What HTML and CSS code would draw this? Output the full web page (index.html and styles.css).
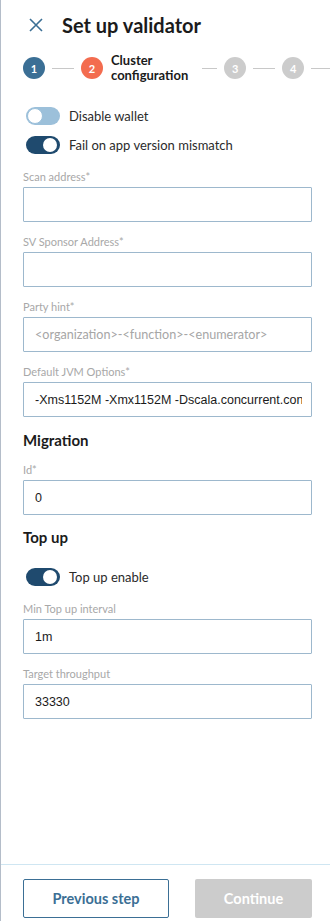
FILE: index.html
```html
<!DOCTYPE html>
<html lang="en">
  <head>
    <meta charset="UTF-8" />
    <meta name="viewport" content="width=device-width, initial-scale=1.0" />
    <title>Set up validator</title>
    <link rel="stylesheet" href="styles.css">
  </head>
  <body>
    <div class="panel">
      <div class="header">
        <button class="close-button" type="button" aria-label="Close">
          <svg width="14" height="14" viewBox="0 0 14 14">
            <path d="M1 1 L13 13 M13 1 L1 13" stroke="#3b6f95" stroke-width="1.6" fill="none" />
          </svg>
        </button>
        <h1>Set up validator</h1>
      </div>

      <div class="stepper">
        <span class="step done">1</span>
        <span class="step-line"></span>
        <span class="step active">2</span>
        <span class="step-text">Cluster<br />configuration</span>
        <span class="step-line short"></span>
        <span class="step">3</span>
        <span class="step-line"></span>
        <span class="step">4</span>
        <span class="step-line grow"></span>
      </div>

      <form class="form" id="validatorForm">
        <div class="toggles">
          <label class="toggle-row">
            <span class="switch light"><span class="knob"></span></span>
            Disable wallet
          </label>
          <label class="toggle-row">
            <span class="switch on"><span class="knob"></span></span>
            Fail on app version mismatch
          </label>
        </div>

        <div class="field">
          <label for="scanAddress">Scan address*</label>
          <input type="text" id="scanAddress" />
        </div>

        <div class="field">
          <label for="sponsorAddress">SV Sponsor Address*</label>
          <input type="text" id="sponsorAddress" />
        </div>

        <div class="field">
          <label for="partyHint">Party hint*</label>
          <input type="text" id="partyHint" placeholder="<organization>-<function>-<enumerator>" />
        </div>

        <div class="field">
          <label for="jvmOptions">Default JVM Options*</label>
          <input type="text" id="jvmOptions" value="-Xms1152M -Xmx1152M -Dscala.concurrent.context.numThreads=8" />
        </div>

        <h2>Migration</h2>
        <div class="field">
          <label for="migrationId">Id*</label>
          <input type="text" id="migrationId" value="0" />
        </div>

        <h2 class="topup-title">Top up</h2>
        <label class="toggle-row topup-toggle">
          <span class="switch on"><span class="knob"></span></span>
          Top up enable
        </label>

        <div class="field">
          <label for="topupInterval">Min Top up interval</label>
          <input type="text" id="topupInterval" value="1m" />
        </div>

        <div class="field">
          <label for="throughput">Target throughput</label>
          <input type="text" id="throughput" value="33330" />
        </div>
      </form>

      <div class="footer">
        <button type="button" class="prev-button">Previous step</button>
        <button type="button" class="continue-button" disabled>Continue</button>
      </div>
    </div>
  </body>
</html>
```

FILE: styles.css
```css
body {
  font-family: "Lato", "Noto Sans", sans-serif;
  margin: 0;
  padding: 0;
  background-color: #ffffff;
  color: #333;
}

.panel {
  display: flex;
  flex-direction: column;
  height: 100vh;
  border-left: 1px solid #b4bdc9;
  box-sizing: border-box;
}

.header {
  display: flex;
  align-items: center;
  padding: 14px 0 0 28px;
  height: 22px;
}

.close-button {
  border: none;
  background: none;
  padding: 0;
  margin: 0 19px 0 0;
  width: 14px;
  height: 14px;
  display: flex;
  cursor: pointer;
}

h1 {
  margin: 0;
  font-size: 20px;
  font-weight: 700;
  color: #1b1b1b;
  line-height: 22px;
}

.stepper {
  display: flex;
  align-items: center;
  gap: 7px;
  margin-top: 17px;
  padding-left: 22px;
}

.step {
  flex: none;
  width: 22px;
  height: 22px;
  border-radius: 50%;
  background-color: #cccccc;
  color: #ffffff;
  font-size: 11px;
  font-weight: 700;
  display: flex;
  align-items: center;
  justify-content: center;
}

.step.done {
  background-color: #3b6f95;
}

.step.active {
  background-color: #f36c4f;
}

.step-text {
  font-size: 13px;
  font-weight: 700;
  line-height: 15px;
  color: #1b1b1b;
  margin: 0 7px 0 1px;
}

.step-line {
  flex: none;
  width: 22px;
  height: 1px;
  background-color: #c8c8c8;
}

.step-line.short {
  width: 15px;
}

.step-line.grow {
  flex: 1;
}

.form {
  flex: 1;
  padding: 0 18px 0 22px;
}

.toggles {
  display: flex;
  flex-direction: column;
  gap: 11px;
  margin-top: 24px;
  margin-bottom: 16px;
}

.toggle-row {
  display: flex;
  align-items: center;
  gap: 9px;
  font-size: 13px;
  color: #2b2b2b;
  padding-left: 3px;
  height: 18px;
}

.switch {
  position: relative;
  flex: none;
  width: 34px;
  height: 18px;
  border-radius: 9px;
  background-color: #1f4a6e;
}

.switch.light {
  background-color: #9cc0da;
}

.knob {
  position: absolute;
  top: 2px;
  right: 3px;
  width: 14px;
  height: 14px;
  border-radius: 50%;
  background-color: #ffffff;
}

.switch.light .knob {
  right: auto;
  top: 1px;
  left: 1px;
  border: 1px solid #9cc0da;
  box-sizing: content-box;
}

.field {
  display: flex;
  flex-direction: column;
  margin-bottom: 13px;
}

.field label {
  font-size: 11px;
  line-height: 14px;
  color: #a8a8a8;
  margin-bottom: 3px;
}

input {
  box-sizing: border-box;
  width: 289px;
  height: 35px;
  padding: 0 9px 0 11px;
  border: 1px solid #9db8cd;
  border-radius: 1px;
  font-family: "Liberation Sans", Arial, sans-serif;
  font-size: 12.5px;
  color: #1b1b1b;
  outline: none;
}

input::placeholder {
  font-family: "Lato", sans-serif;
  font-size: 12.6px;
  color: #a6a6a6;
}

h2 {
  margin: 1px 0 13px;
  font-size: 15px;
  font-weight: 700;
  line-height: 20px;
  color: #1b1b1b;
}

.topup-title {
  margin-top: -1px;
  margin-bottom: 21px;
}

.topup-toggle {
  margin-bottom: 16px;
}

.footer {
  display: flex;
  justify-content: space-between;
  border-top: 1px solid #cfe6f2;
  padding: 14px 18px 3px 22px;
}

.footer button {
  height: 39px;
  font-family: "Lato", sans-serif;
  font-size: 14.5px;
  font-weight: 700;
  border-radius: 2px;
}

.prev-button {
  width: 146px;
  background-color: #ffffff;
  border: 1px solid #3b6f95;
  color: #3b6f95;
  cursor: pointer;
}

.continue-button {
  width: 117px;
  background-color: #cccccc;
  border: none;
  color: #ffffff;
}
```
